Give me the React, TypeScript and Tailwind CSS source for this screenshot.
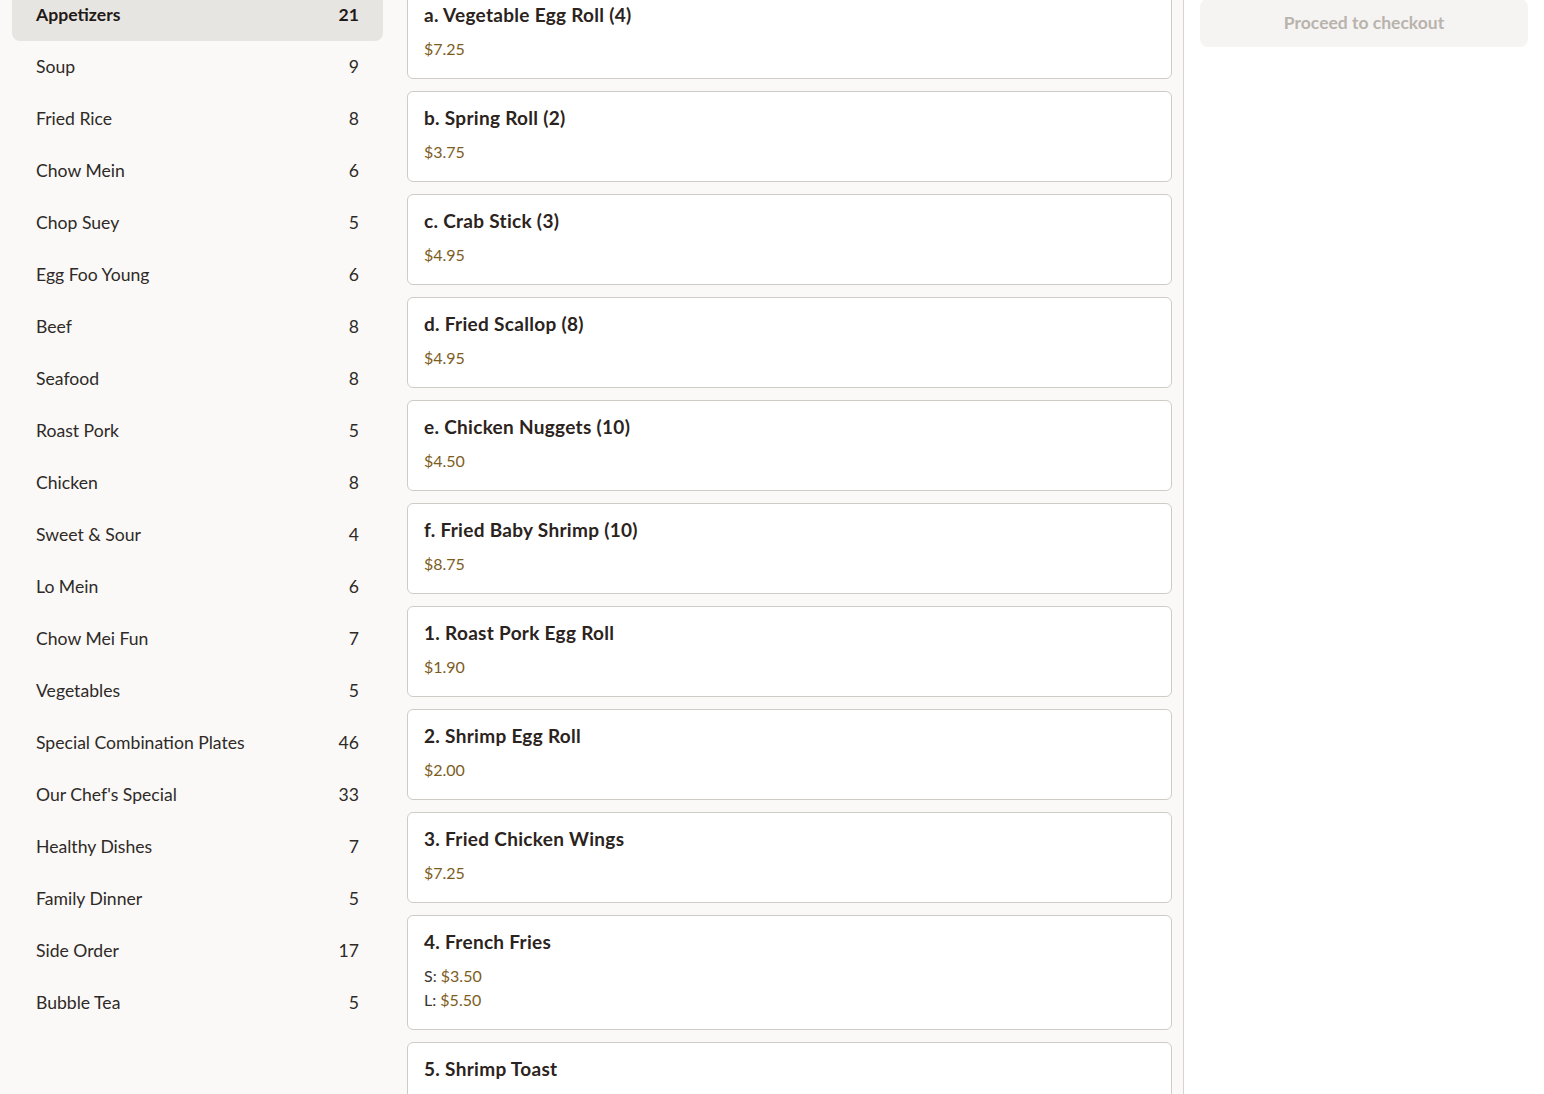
import React from 'react'

const categories: [string, number][] = [
  ['Appetizers', 21],
  ['Soup', 9],
  ['Fried Rice', 8],
  ['Chow Mein', 6],
  ['Chop Suey', 5],
  ['Egg Foo Young', 6],
  ['Beef', 8],
  ['Seafood', 8],
  ['Roast Pork', 5],
  ['Chicken', 8],
  ['Sweet & Sour', 4],
  ['Lo Mein', 6],
  ['Chow Mei Fun', 7],
  ['Vegetables', 5],
  ['Special Combination Plates', 46],
  ["Our Chef's Special", 33],
  ['Healthy Dishes', 7],
  ['Family Dinner', 5],
  ['Side Order', 17],
  ['Bubble Tea', 5],
]

type Item = { name: string; prices: { label?: string; price: string }[] }

const items: Item[] = [
  { name: 'a. Vegetable Egg Roll (4)', prices: [{ price: '$7.25' }] },
  { name: 'b. Spring Roll (2)', prices: [{ price: '$3.75' }] },
  { name: 'c. Crab Stick (3)', prices: [{ price: '$4.95' }] },
  { name: 'd. Fried Scallop (8)', prices: [{ price: '$4.95' }] },
  { name: 'e. Chicken Nuggets (10)', prices: [{ price: '$4.50' }] },
  { name: 'f. Fried Baby Shrimp (10)', prices: [{ price: '$8.75' }] },
  { name: '1. Roast Pork Egg Roll', prices: [{ price: '$1.90' }] },
  { name: '2. Shrimp Egg Roll', prices: [{ price: '$2.00' }] },
  { name: '3. Fried Chicken Wings', prices: [{ price: '$7.25' }] },
  {
    name: '4. French Fries',
    prices: [
      { label: 'S:', price: '$3.50' },
      { label: 'L:', price: '$5.50' },
    ],
  },
  { name: '5. Shrimp Toast', prices: [{ price: '$4.95' }] },
]

export default function App() {
  return (
    <div
      className="h-[1094px] overflow-hidden bg-[#faf9f7] text-[#2b2522]"
      style={{ fontFamily: 'Lato, "Open Sans", sans-serif' }}
    >
      <div className="flex -mt-3">
        {/* Category sidebar */}
        <nav className="w-[395px] shrink-0 px-3 pt-px">
          {categories.map(([name, count], i) => (
            <div
              key={name}
              className={
                'flex h-[52px] items-center justify-between rounded-lg px-6 text-[17.6px] ' +
                (i === 0 ? 'bg-[#e7e5e2] font-bold text-[#1f1a17]' : 'text-[#2e2a27]')
              }
            >
              <span>{name}</span>
              <span>{count}</span>
            </div>
          ))}
        </nav>

        {/* Menu items */}
        <main className="w-[789px] shrink-0 border-r border-[#d6d3d1] pl-3 pr-[11px]">
          <div className="flex flex-col gap-3">
            {items.map((item) => (
              <div
                key={item.name}
                className="rounded-md border border-[#cfccc8] bg-white px-4 pb-[17px] pt-3.5"
              >
                <div className="text-[19px] font-bold leading-6 tracking-[0.3px] text-[#2b2320]">
                  {item.name}
                </div>
                <div className="mt-2.5">
                  {item.prices.map((p) => (
                    <div key={p.price} className="text-[16px] leading-6">
                      {p.label && <span className="text-[#3a3532]">{p.label} </span>}
                      <span className="text-[#7d5d1e]">{p.price}</span>
                    </div>
                  ))}
                </div>
              </div>
            ))}
          </div>
        </main>

        {/* Cart */}
        <aside className="flex-1 bg-white px-4 pt-[11px]">
          <button className="h-12 w-full rounded-lg bg-[#f5f4f2] text-[17.5px] font-bold text-[#b8b3ad]">
            Proceed to checkout
          </button>
        </aside>
      </div>
    </div>
  )
}
